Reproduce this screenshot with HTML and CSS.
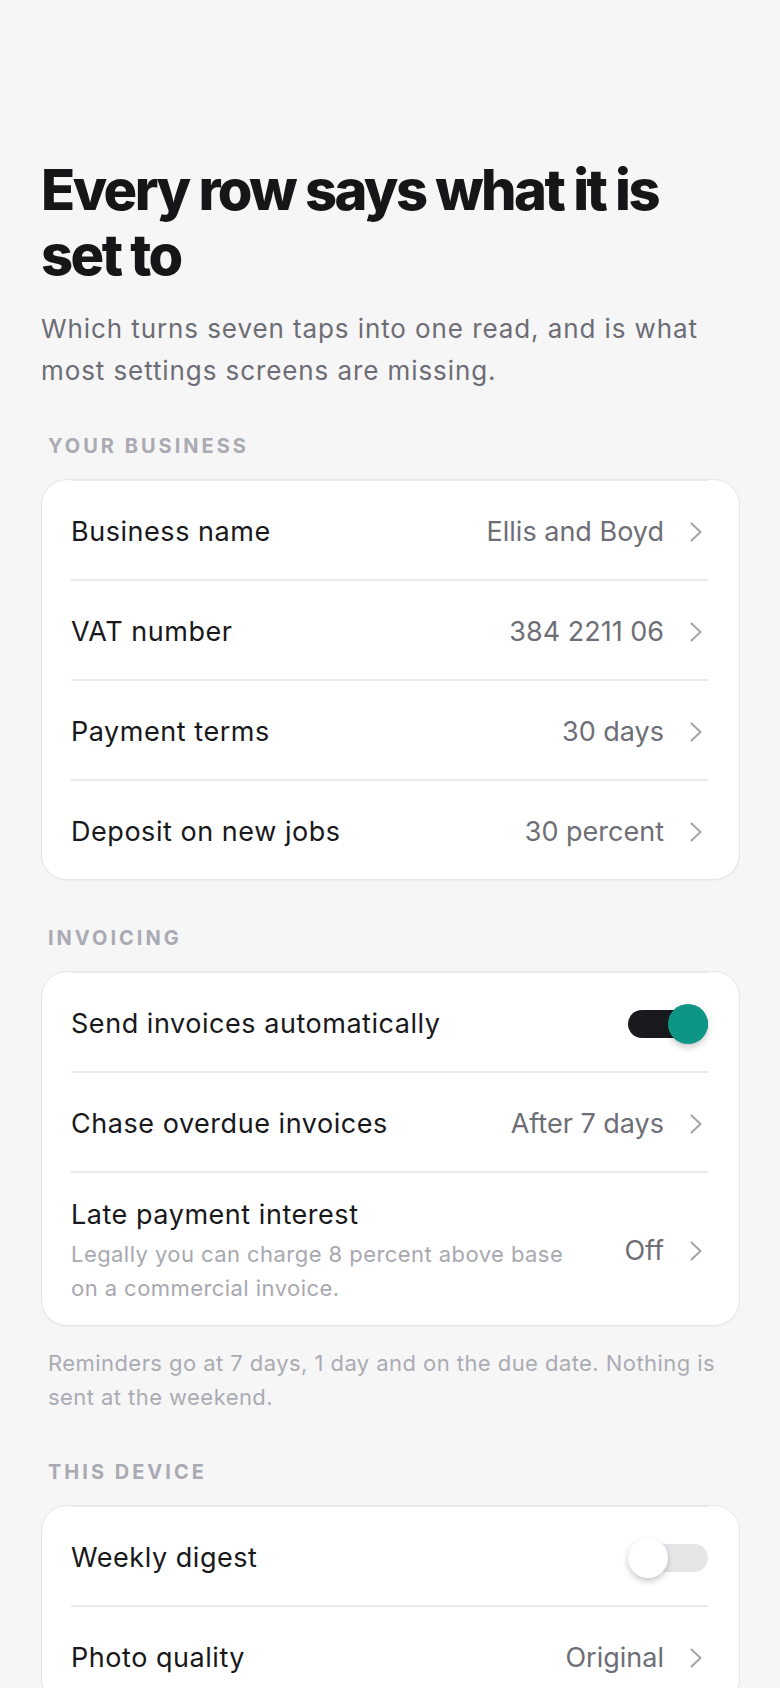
FILE: index.html
```html
<!DOCTYPE html>
<html lang="en">
<head>
    <meta charset="UTF-8">
    <meta name="viewport" content="width=device-width, initial-scale=1.0">
    <title>Settings</title>
    <link rel="stylesheet" href="styles.css">
</head>
<body>
    <main class="page">
        <h1 class="title">Every row says what it is set to</h1>
        <p class="lede">Which turns seven taps into one read, and is what most settings screens are missing.</p>

        <section class="group">
            <h2 class="group-label">Your business</h2>
            <div class="card">
                <div class="row">
                    <span class="row-label">Business name</span>
                    <span class="row-value">Ellis and Boyd</span>
                    <svg class="chev" width="12" height="20" viewBox="0 0 12 20"><path d="M1.5 1.5L10.5 10L1.5 18.5"/></svg>
                </div>
                <div class="row">
                    <span class="row-label">VAT number</span>
                    <span class="row-value">384 2211 06</span>
                    <svg class="chev" width="12" height="20" viewBox="0 0 12 20"><path d="M1.5 1.5L10.5 10L1.5 18.5"/></svg>
                </div>
                <div class="row">
                    <span class="row-label">Payment terms</span>
                    <span class="row-value">30 days</span>
                    <svg class="chev" width="12" height="20" viewBox="0 0 12 20"><path d="M1.5 1.5L10.5 10L1.5 18.5"/></svg>
                </div>
                <div class="row">
                    <span class="row-label">Deposit on new jobs</span>
                    <span class="row-value">30 percent</span>
                    <svg class="chev" width="12" height="20" viewBox="0 0 12 20"><path d="M1.5 1.5L10.5 10L1.5 18.5"/></svg>
                </div>
            </div>
        </section>

        <section class="group">
            <h2 class="group-label">Invoicing</h2>
            <div class="card">
                <div class="row">
                    <span class="row-label">Send invoices automatically</span>
                    <span class="switch on"><span class="knob"></span></span>
                </div>
                <div class="row">
                    <span class="row-label">Chase overdue invoices</span>
                    <span class="row-value">After 7 days</span>
                    <svg class="chev" width="12" height="20" viewBox="0 0 12 20"><path d="M1.5 1.5L10.5 10L1.5 18.5"/></svg>
                </div>
                <div class="row">
                    <div class="row-text">
                        <span class="row-label">Late payment interest</span>
                        <span class="row-desc">Legally you can charge 8 percent above base on a commercial invoice.</span>
                    </div>
                    <span class="row-value">Off</span>
                    <svg class="chev" width="12" height="20" viewBox="0 0 12 20"><path d="M1.5 1.5L10.5 10L1.5 18.5"/></svg>
                </div>
            </div>
            <p class="group-note">Reminders go at 7 days, 1 day and on the due date. Nothing is sent at the weekend.</p>
        </section>

        <section class="group">
            <h2 class="group-label">This device</h2>
            <div class="card">
                <div class="row">
                    <span class="row-label">Weekly digest</span>
                    <span class="switch"><span class="knob"></span></span>
                </div>
                <div class="row">
                    <span class="row-label">Photo quality</span>
                    <span class="row-value">Original</span>
                    <svg class="chev" width="12" height="20" viewBox="0 0 12 20"><path d="M1.5 1.5L10.5 10L1.5 18.5"/></svg>
                </div>
            </div>
        </section>
    </main>
</body>
</html>
```

FILE: styles.css
```css
* {
    box-sizing: border-box;
}
body {
    margin: 0;
    font-family: Inter, "Noto Sans", Arial, sans-serif;
    background-color: #f6f6f7;
    color: #18181b;
}
.page {
    padding: 158px 40px 60px 41px;
}
.title {
    margin: 0;
    font-size: 56px;
    line-height: 65px;
    font-weight: 800;
    letter-spacing: -0.045em;
    color: #161618;
}
.lede {
    margin: 20px 0 0;
    font-size: 26px;
    line-height: 42px;
    letter-spacing: 0.035em;
    color: #6d6d75;
}
.group {
    margin-top: 42px;
}
.group + .group {
    margin-top: 46px;
}
.group-label {
    margin: 0 0 21px;
    padding-left: 7px;
    font-size: 20px;
    line-height: 24px;
    font-weight: 700;
    letter-spacing: 0.15em;
    text-transform: uppercase;
    color: #aaaab3;
}
.card {
    background-color: #fff;
    border: 1px solid #e6e6e9;
    border-radius: 26px;
    padding: 0 31px 0 29px;
    box-shadow: 0 1px 1px rgba(0, 0, 0, 0.03);
}
.row {
    display: flex;
    align-items: center;
    min-height: 100px;
    padding: 24px 0 20px;
    border-top: 2px solid #e9e9eb;
}
.row:first-child {
    margin-top: -1px;
}
.row-text {
    flex: 1;
    display: flex;
    flex-direction: column;
    gap: 4px;
}
.row-label {
    flex: 1;
    font-size: 27px;
    line-height: 36px;
    letter-spacing: 0.02em;
    color: #18181b;
}
.row-desc {
    font-size: 22px;
    line-height: 34px;
    letter-spacing: 0.02em;
    color: #a8a8b0;
}
.row-value {
    margin-left: 40px;
    font-size: 27px;
    line-height: 36px;
    color: #6e6e76;
    white-space: nowrap;
}
.chev {
    flex: none;
    margin: 0 6px 0 26px;
    fill: none;
    stroke: #a3a3ab;
    stroke-width: 2;
    stroke-linecap: round;
    stroke-linejoin: round;
}
.group-note {
    margin: 20px 0 0;
    padding: 0 7px;
    font-size: 22px;
    line-height: 34px;
    letter-spacing: 0.02em;
    color: #ababb3;
}
.switch {
    position: relative;
    flex: none;
    width: 80px;
    height: 28px;
    border-radius: 14px;
    background-color: #e6e6e8;
}
.switch .knob {
    position: absolute;
    top: -6px;
    left: 0;
    width: 40px;
    height: 40px;
    border-radius: 50%;
    background-color: #fff;
    box-shadow: 0 3px 6px rgba(0, 0, 0, 0.22);
}
.switch.on {
    background-color: #1a1a1e;
}
.switch.on .knob {
    left: 40px;
    background-color: #0c9683;
}
```
